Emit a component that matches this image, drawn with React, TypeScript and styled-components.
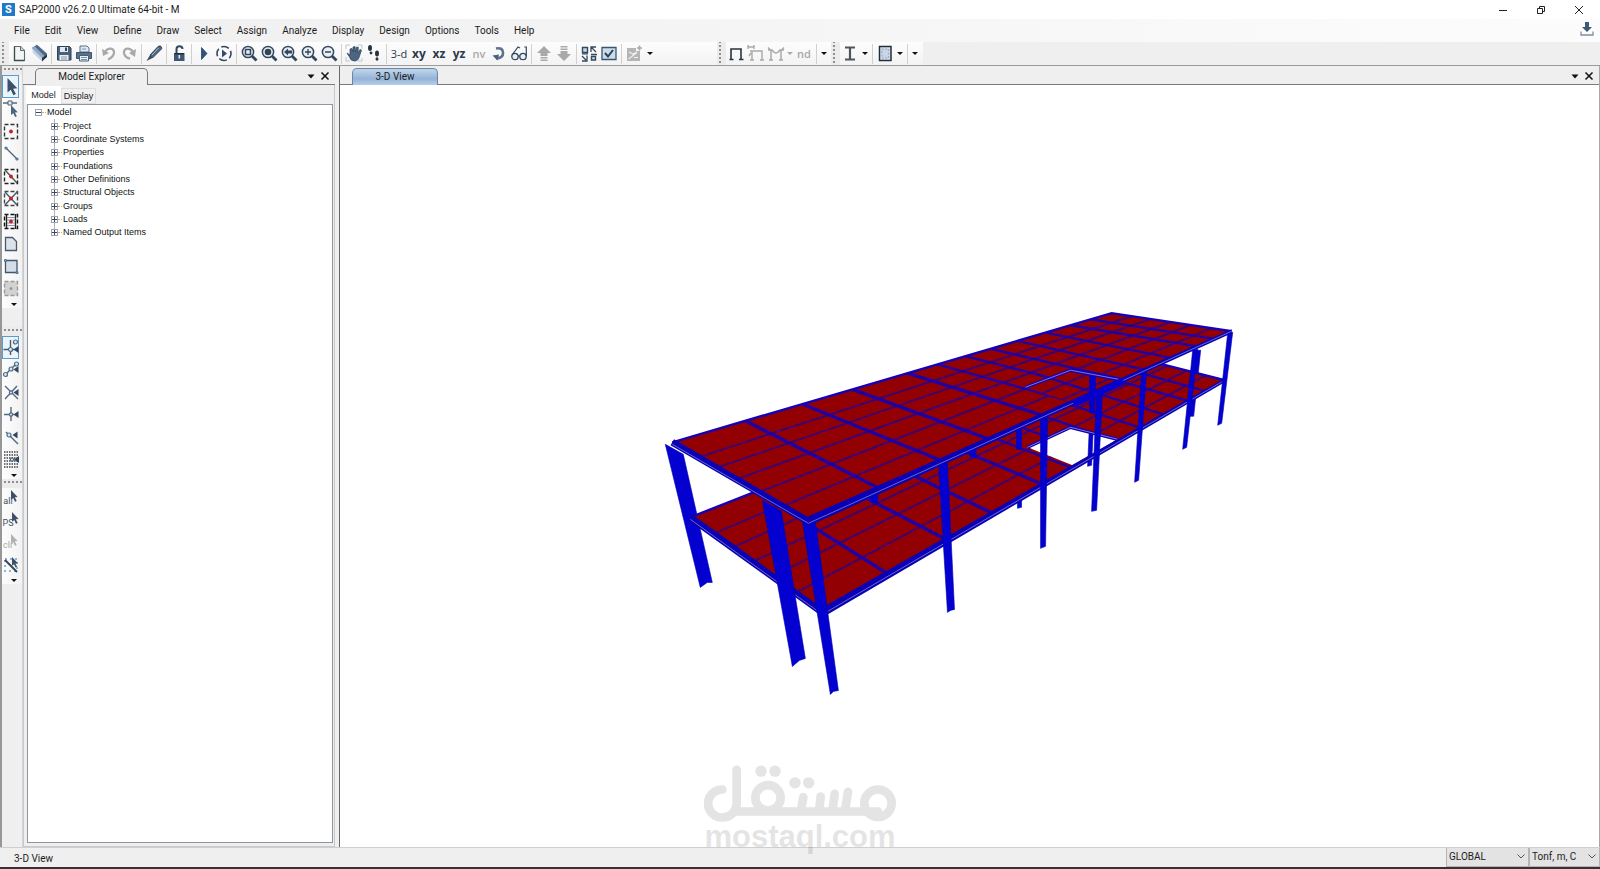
import React, { useState } from 'react';
import styled, { createGlobalStyle } from 'styled-components';

const GlobalStyle = createGlobalStyle`
  * { box-sizing: border-box; }
  body { margin: 0; background: #efefef; }
  button { font: inherit; color: inherit; border: 0; background: none; padding: 0; margin: 0; }
  ul { list-style: none; margin: 0; padding: 0; }
`;

const ui = `Roboto, "Noto Sans", sans-serif`;
const small = `"Liberation Sans", sans-serif`;
const INK = '#33475f';
const GREY = '#a9a9a9';

/* ---------- icons ---------- */

const loupe = (inner: React.ReactNode) => (
  <>
    <circle cx="8" cy="8" r="5.6" fill="#e9eef3" stroke={INK} strokeWidth="1.5" />
    <path d="M12 12l4.5 4.5" stroke={INK} strokeWidth="2.8" />
    {inner}
  </>
);
const pointer = (x: number, y: number, s: number, c = '#3e4f66') => (
  <path transform={`translate(${x} ${y}) scale(${s})`} d="M0 0l8.5 9-3.6.4 2.4 4.6-2.2 1-2.2-4.7L0 12.6z" fill={c} />
);
const dashed = (c: string, fill = 'none') => (
  <rect x="2.5" y="2.5" width="13" height="14" fill={fill} stroke={c} strokeWidth="1.4" strokeDasharray="4 2" />
);
const left = (x: number, y: number) => <path d={`M${x} ${y}l5-3.5v7z`} fill={INK} />;
const node = (x: number, y: number, r = 2) => (
  <circle cx={x} cy={y} r={r} fill="#dbe8f2" stroke="#4a6e90" strokeWidth="1.2" />
);
const line = (d: string, c = INK, w = 1.4) => <path d={d} fill="none" stroke={c} strokeWidth={w} />;

const drawings: Record<string, React.ReactNode> = {
  file: (
    <>
      <path d="M4.500 2.500h6l4 4v10h-10z" fill="#f3f5f4" stroke="#5c6b70" strokeWidth="1.1" />
      <path d="M10.500 2.500v4h4" fill="#c8d0d2" stroke="#5c6b70" />
      <path d="M4.500 2.500v14h10" fill="none" stroke="#3f4b50" strokeWidth="1.3" />
    </>
  ),
  open: (
    <>
      <path d="M2 4l5-3 10 9-5 4z" fill="#8ea9c5" stroke="#6d859e" strokeWidth=".6" />
      <path d="M2 4l10 10v3.500L3 9z" fill="#c3d3e2" />
      <path d="M12 14l5-4v3l-5 4.500z" fill="#23364d" />
      <path d="M7 1l10 9-2.500 2L5 2.500z" fill="#4b6682" />
    </>
  ),
  save: (
    <>
      <path d="M2.500 2.500h12l1.500 1.500v12h-13.500z" fill="#4a617b" stroke="#2f4359" />
      <path d="M5 3h8v5H5z" fill="#dfe9f2" />
      <path d="M10 3.500h2v3.500h-2z" fill={INK} />
      <path d="M4.500 11h9v5h-9z" fill="#e9eef2" />
      {line('M6 13h6M6 15h6', '#8294a6', 1)}
    </>
  ),
  print: (
    <>
      <path d="M5 2h7l2 2v4H5z" fill="#dfe8f0" stroke="#587089" />
      <path d="M1.500 8.500h15v6h-15z" fill="#58728c" stroke="#3c536b" />
      <path d="M4.500 11.500h9v5.500h-9z" fill="#e7eef4" stroke="#47607a" />
      {line('M6 13.500h6M6 15.500h6M7 5h4', '#7f93a7', 1)}
    </>
  ),
  undo: (
    <>
      {line('M5 8c2-4 8-5 9-.5.600 3-2 6.500-6 8', GREY, 2.3)}
      <path d="M2 5l1 7 6-3z" fill={GREY} />
    </>
  ),
  redo: (
    <>
      {line('M13 8c-2-4-8-5-9-.5-.6 3 2 6.500 6 7', GREY, 2.3)}
      <path d="M16 5l-1 8-6-4z" fill={GREY} />
    </>
  ),
  pen: (
    <>
      <path d="M5 11L13 2.500q2.500-1.500 3.500.5t-1 3L7.500 14z" fill="#4f6681" stroke="#26394f" strokeWidth=".8" />
      <path d="M7 11l6.500-7" stroke="#a4bad0" />
      <path d="M5 11l2.500 3L1.500 17z" fill="#3c4b5d" />
    </>
  ),
  lock: (
    <>
      {line('M6.500 9V5q0-2.800 3-2.800T12.500 5', INK, 2)}
      <path d="M4 9h10.500v8H4z" fill="#3f5873" />
      <path d="M8.500 11h1.600v3.500H8.500z" fill="#e4ecf3" />
      {line('M4.500 9.700h9.500', '#16283b', 1.2)}
    </>
  ),
  play: <path d="M6.500 3.500L12 9.500l-5.500 6z" fill="#2f5480" stroke="#203a5b" strokeWidth=".7" />,
  run: (
    <>
      <circle cx="9" cy="9.500" r="7" fill="none" stroke={INK} strokeWidth="1.600" strokeDasharray="8 3" strokeDashoffset="3" />
      <path d="M7 5.500l5 4-5 4z" fill="#2f4c70" />
    </>
  ),
  zoomRect: loupe(<path d="M5.500 5.500h5v5h-5z" fill="none" stroke={INK} strokeWidth="1.500" />),
  zoomAll: loupe(<circle cx="8" cy="8" r="3.300" fill="#345" />),
  zoomPrev: loupe(<path d="M4 8l4-3.500v2h4v3H8v2z" fill={INK} />),
  zoomIn: loupe(line('M5 8h6M8 5v6', INK, 1.3)),
  zoomOut: loupe(line('M5 8h6', INK, 1.5)),
  hand: (
    <>
      <path d="M1 5V1h4M13 1h4v4M17 14v3h-4M5 17H1v-4" fill="none" stroke="#b9c5d0" />
      <path d="M2 9l3 2V5l2-.5L8 8V3l2-.5L10.500 8l1-5 1.800.3L13 9l2-3.500 1.500.7L14.500 12q-1 5-5 5T4.500 13z" fill="#4c6580" stroke="#2c4058" strokeWidth=".7" />
    </>
  ),
  feet: (
    <>
      <ellipse cx="5" cy="4" rx="2" ry="3" fill="#26333f" />
      <ellipse cx="6" cy="9" rx="1.400" ry="1.400" fill="#26333f" />
      <ellipse cx="12" cy="9.500" rx="2" ry="3" fill="#26333f" />
      <ellipse cx="12" cy="15" rx="1.500" ry="1.700" fill="#26333f" />
    </>
  ),
  rotate: (
    <>
      {line('M6 4.500q6.500-1.500 7 4T6 14.500', '#5c748d', 2.600)}
      <path d="M2.500 11.500l6.500-1-1.500 6z" fill="#49617b" />
    </>
  ),
  glasses: (
    <>
      <circle cx="5" cy="12.500" r="3.200" fill="#e7edf2" stroke={INK} strokeWidth="1.300" />
      <circle cx="13" cy="12.500" r="3.200" fill="#e7edf2" stroke={INK} strokeWidth="1.300" />
      {line('M8 12h2M2 11L8 3l2 1M16.300 12V3l-2 0', INK, 1.2)}
    </>
  ),
  up: <path d="M9 2l7 7h-3.500v3h-7V9H2zM5.500 13h7v1.500h-7zM5.500 15.500h7V17h-7z" fill={GREY} />,
  down: <path d="M9 17l7-7h-3.500V7h-7v3H2zM5.500 4.500h7V6h-7zM5.500 2h7v1.500h-7z" fill={GREY} />,
  windows: (
    <>
      <path d="M2.500 3.500h5v5h-5zM11.500 12.500h4v3.500h-4z" fill="#c9d8e8" stroke={INK} strokeWidth="1.400" />
      {line('M11 8V3h5M11 3l5 5M2 12l4 4M7 11.500V17H2M2 9.800h6M11 10.500h6', INK, 1.3)}
    </>
  ),
  check: (
    <>
      <path d="M2 3.500h14v12H2z" fill="#cbdcec" stroke="#3d5670" strokeWidth="1.300" />
      {line('M5 9l3 3.500L13 6', '#2c4258', 2)}
    </>
  ),
  object: (
    <>
      <path d="M2 4h9v3h4v10H2z" fill="#b5b5b5" />
      {line('M4 8l4 2 4-2M3.500 15L12 8.500M9 13.500h4', '#efefef', 1.200)}
      {line('M12 4h5M14.500 1.500v5', GREY, 1.600)}
    </>
  ),
  frame: line('M2.500 15.500h4M4 15.500V5h10v10.500M12 15.500h4.500', '#273342', 1.600),
  frameLoad: line('M3 7h12v9M5 7v9M3 16h4M13 16h4M1 1v4M1 3h6M7 1v4M4 9l-2 3', GREY, 1.4),
  frameMoment: line('M1 6h4q4 6 8 0h4M4 6v10M14 6v10M2 16h4M12 16h4M1 3.500l3 3M17 3.500l-3 3', GREY, 1.500),
  ibeam: line('M4 3.500h10M9 3.500v12M4 15.500h10', '#4b565f', 2.200),
  section: (
    <>
      <path d="M3.500 2.500h11.500v14H3.500z" fill="#d8e2ef" stroke="#202d3c" strokeWidth="1.500" />
      <path d="M5.800 5h7v9h-7z" fill="#c7d5e8" stroke="#8fa0b5" strokeDasharray="2 1.500" />
    </>
  ),
  select: pointer(5.5, 1, 1.15),
  reshape: (
    <>
      {line('M1 4h14', '#4c5f75', 1.4)}
      <path d="M6 2h4v4H6z" fill="#e5edf4" stroke="#4c5f75" />
      {pointer(9, 6, 0.8, '#4c6680')}
    </>
  ),
  joint: <>{dashed('#333')}<circle cx="9" cy="9.500" r="1.900" fill="#c4202a" /></>,
  line: <>{line('M4 4l11 11', '#4c6279', 1.3)}{node(4, 4, 1)}{node(15, 15, 1)}</>,
  quickLine: <>{dashed('#222')}{line('M3 3l12 13', '#555', 1.4)}<circle cx="9" cy="9.500" r="1.900" fill="#c4202a" /></>,
  brace: <>{dashed('#444')}{line('M3 3l12 13M15 3L3 16', '#445b74', 1.4)}<circle cx="9" cy="9.500" r="1.900" fill="#c4202a" /></>,
  secondary: (
    <>
      {dashed('#111')}
      {line('M4.500 2v15M13.500 2v15', '#222', 1.400)}
      {line('M5 5.500h8M5 8h8M5 11h8M5 13.500h8', '#8797a8', 1)}
      <circle cx="9" cy="9.500" r="1.900" fill="#c4202a" />
    </>
  ),
  poly: <path d="M3.500 3.500h7l4 4v9h-11z" fill="#dbe2ea" stroke="#4c5b6b" strokeWidth="1.300" />,
  rect: (
    <>
      <path d="M3.500 3.500h11.500v12H3.500z" fill="#d3dde9" stroke="#44566a" strokeWidth="1.300" />
      {node(3.500, 3.500, 1)}{node(15, 15.500, 1)}
    </>
  ),
  quickRect: <>{dashed('#999', '#d2d2d2')}<circle cx="9" cy="9.500" r="1.500" fill="#999" /></>,
  snapPoint: <>{line('M1.500 11.500h11M8.500 2v15', '#555')}{node(8.500, 11.500)}{node(13.500, 4)}{left(11.500, 11.500)}</>,
  snapMid: <>{line('M3 15L15 3', '#54687e')}{node(3.500, 14.500)}{node(9, 9)}{node(14.500, 4)}{left(11.500, 9.500)}</>,
  snapCross: <>{line('M3 3l13 13M15 3L3 16', '#54687e')}{node(9, 9.500, 1.600)}{left(11.500, 9.500)}</>,
  snapPerp: <>{line('M2 9.500h10M9 2v14', '#54687e')}{node(9, 9.500, 1.600)}{left(11.500, 9.500)}</>,
  snapLine: <>{line('M4 4l12 12', '#54687e')}{node(7, 7)}{left(10.500, 7)}</>,
  snapGrid: (
    <>
      {[2, 5, 8, 11, 14, 17].map(y => (
        <path key={y} d={`M2 ${y}h15`} stroke="#444" strokeWidth="1.300" strokeDasharray="1.500 1" />
      ))}
      {node(10, 9.500, 1.600)}{left(12, 9.500)}
    </>
  ),
  cut: (
    <>
      <rect x="3" y="3" width="12" height="12" fill="none" stroke="#8eb4d3" strokeDasharray="2 3" strokeWidth="2" />
      {line('M3 4l12 12', INK, 2)}{pointer(10, 1, 0.7)}
    </>
  ),
};

const Glyph = styled.svg`
  display: block;
  width: 18px;
  height: 19px;
  flex: none;
`;
const Icon = ({ name }: { name: string }) => (
  <Glyph viewBox="0 0 18 19" aria-hidden="true">{drawings[name]}</Glyph>
);

/* ---------- window frame ---------- */

const Window = styled.div`
  display: flex;
  flex-direction: column;
  min-height: 100vh;
  position: relative;
  font: 10px/14px ${ui};
  color: #1c1c1c;
`;
const TitleBar = styled.header`
  display: flex;
  align-items: center;
  height: 19px;
  padding: 0 2px;
  background: #fff;
`;
const AppBadge = styled.span`
  display: grid;
  place-items: center;
  width: 13px;
  height: 13px;
  background: #1f7ac8;
  color: #fff;
  font: bold 11px/13px ${ui};
  margin-right: 4px;
`;
const AppTitle = styled.h1`
  flex: 1;
  margin: 0;
  font: 10px/16px ${ui};
`;
const WindowButton = styled.button`
  width: 38px;
  height: 16px;
  display: grid;
  place-items: center;
`;
const MenuBar = styled.nav`
  display: flex;
  align-items: center;
  height: 23px;
  padding: 0 6px 0 14px;
  gap: 15px;
  background: linear-gradient(90deg, #efefef, #fcfcfc);
`;
const MenuButton = styled.button`
  height: 20px;
`;
const MenuEnd = styled.button`
  margin-left: auto;
`;
const ToolRow = styled.div`
  display: flex;
  height: 24px;
  border-bottom: 1px solid #9b9b9b;
`;
const ToolBar = styled.div<{ $w: number }>`
  display: flex;
  align-items: center;
  width: ${p => p.$w}px;
  background: linear-gradient(#fdfdfd, #f3f3f3);
`;
const Grip = styled.span`
  align-self: stretch;
  width: 9px;
  flex: none;
  background: radial-gradient(circle, #8f8f8f 1px, transparent 1px) 1px 2px / 4px 4px repeat-y, #ececec;
`;
const Tool = styled.button<{ $w?: number; $off?: boolean; $bold?: boolean }>`
  width: ${p => p.$w ?? 20}px;
  height: 22px;
  display: grid;
  place-items: center;
  color: ${p => (p.$off ? GREY : '#2c3a4b')};
  font: ${p => (p.$bold ? 'bold 12px' : p.$off ? '600 11px' : '11px')}/16px "Open Sans", ${ui};
`;
const Divider = styled.span`
  width: 1px;
  height: 20px;
  margin: 0 2px;
  background: #d0d0d0;
`;
const Caret = styled.span<{ $off?: boolean }>`
  border: 3px solid transparent;
  border-top: 3px solid ${p => (p.$off ? GREY : '#111')};
  border-bottom: 0;
`;

/* ---------- body ---------- */

const Body = styled.div`
  flex: 1;
  display: flex;
  border-left: 2px solid #979797;
`;
const SideBar = styled.aside`
  width: 21px;
  flex: none;
  border-right: 1px solid #d5d5d5;
`;
const SideGroup = styled.div`
  display: flex;
  flex-direction: column;
  background: linear-gradient(90deg, #fdfdfd, #f2f2f2);
`;
const SideGrip = styled.div`
  height: 9px;
  background: radial-gradient(circle, #8f8f8f 1px, transparent 1px) 1px 1px / 4px 4px repeat-x, #ececec;
`;
const SideStack = styled.div<{ $h: number }>`
  display: flex;
  flex-direction: column;
  height: ${p => p.$h}px;
`;
const SideTool = styled.button<{ $on?: boolean; $off?: boolean }>`
  flex: 1;
  width: 17px;
  display: flex;
  align-items: center;
  justify-content: center;
  overflow: hidden;
  color: ${p => (p.$off ? GREY : '#3e5065')};
  ${p => p.$on && 'box-shadow: inset 0 0 0 1px #5c9ccb; background: #eaf4fb;'}
`;
const SideMore = styled.button`
  height: 8px;
  width: 20px;
  padding-left: 4px;
  display: grid;
  place-items: center;
`;
const WordPointer = styled.span`
  display: flex;
  font: 9px/14px ${ui};
  padding-top: 4px;
  svg { margin: -4px 0 0 -2px; flex: none; }
`;
const Gap = styled.div`
  height: 19px;
`;

const Explorer = styled.section`
  width: 312px;
  flex: none;
  display: flex;
  flex-direction: column;
`;
const PaneHead = styled.div`
  display: flex;
  align-items: flex-end;
  height: 19px;
  padding-right: 3px;
  box-shadow: inset 0 -1px #7b7b7b;
`;
const PaneTitle = styled.h2<{ $view?: boolean }>`
  margin: 0 auto 0 12px;
  width: ${p => (p.$view ? 86 : 113)}px;
  height: 17px;
  border: 1px solid ${p => (p.$view ? '#6b86a5' : '#7b7b7b')};
  border-bottom: 0;
  border-radius: 5px 5px 0 0;
  background: ${p => (p.$view ? 'linear-gradient(#c3d6ea, #93b4d8 60%, #b4cde8)' : '#efefef')};
  text-align: center;
  font: 10px/15px ${ui};
`;
const PaneButton = styled.button`
  width: 14px;
  height: 18px;
  display: grid;
  place-items: center;
`;
const PaneBody = styled.div`
  flex: 1;
  display: flex;
  flex-direction: column;
  padding: 1px 1px 3px 2px;
  border: 1px solid #c9c9c9;
  border-top: 0;
`;
const Tabs = styled.div`
  display: flex;
  align-items: flex-end;
  height: 18px;
  font: 9px/14px ${small};
`;
const TabButton = styled.button<{ $on: boolean }>`
  width: 35px;
  height: ${p => (p.$on ? 18 : 16)}px;
  background: ${p => (p.$on ? '#fff' : '#f0f0f0')};
  border: 1px solid ${p => (p.$on ? '#fff' : '#dedede')};
  padding: 0;
`;
const Tree = styled.ul`
  && { flex: 1; padding: 1px 0 0 7px; }
  margin-left: 1px;
  border: 1px solid #8d95a0;
  background: #fff;
  font: 9px/13px ${small};
  color: #111;
`;
const Branch = styled.ul`
  && { padding-left: 16px; }
  background: linear-gradient(#b5b5b5, #b5b5b5) 19px 0 / 1px 115px no-repeat;
`;
const TreeRow = styled.div`
  display: flex;
  align-items: center;
  height: 13px;
`;
const TreeItem = styled.li`
  &:nth-child(3n + 1) > div { height: 14px; }
`;
const Toggle = styled.button`
  width: 7px;
  height: 7px;
  display: grid;
  place-items: center;
  background: #fff;
  box-shadow: 0 0 0 1px #9aa3ae inset;
`;
const Stub = styled.span`
  width: 4px;
  margin-right: 1px;
  border-top: 1px dotted #aaa;
`;

const Workspace = styled.main`
  flex: 1;
  min-width: 0;
  margin-left: 4px;
  display: flex;
  flex-direction: column;
  border-left: 1px solid #686868;
  border-right: 1px solid #a8a8a8;
`;
const Canvas = styled.div`
  flex: 1;
  display: flex;
  background: #fff;
`;
const Scene = styled.svg`
  display: block;
  width: 100%;
  height: auto;
  aspect-ratio: 1258 / 761;
`;
const StatusBar = styled.footer`
  display: flex;
  align-items: stretch;
  height: 23px;
  border-top: 1px solid #cfcfcf;
  border-bottom: 3px solid #35332f;
`;
const StatusText = styled.span`
  flex: 1;
  padding: 4px 14px 0;
`;
const Units = styled.select<{ $w: number }>`
  width: ${p => p.$w}px;
  border: 1px solid #b4b4b4;
  border-top: 0;
  background: #e3e3e3
    url("data:image/svg+xml,%3Csvg xmlns='http://www.w3.org/2000/svg' width='8' height='5'%3E%3Cpath d='M.5.5L4 4 7.500.5' fill='none' stroke='%23555'/%3E%3C/svg%3E")
    right 3px center no-repeat;
  appearance: none;
  padding: 1px 2px 0;
  border-radius: 0;
  font: 10px/16px ${ui};
  color: #1c1c1c;
`;
const Watermark = styled.div`
  position: absolute;
  left: 0;
  right: 0;
  bottom: 18px;
  display: flex;
  flex-direction: column;
  align-items: center;
  opacity: 0.1;
  pointer-events: none;
  font: bold 31px/30px ${small};
  color: #000;
`;
const Brand = styled.svg`
  display: block;
  width: 192px;
  height: 57px;
`;

/* ---------- structural model ---------- */

type Pt = [number, number];
interface Slab {
  corners: [Pt, Pt, Pt, Pt]; // left, front, right, back
  frontX: number[];
  backX: number[];
  nearX: number[];
  farX: number[];
  hole: Pt[];
}
const along = (a: Pt, b: Pt, x: number): Pt => [x, a[1] + ((b[1] - a[1]) * (x - a[0])) / (b[0] - a[0])];
const pts = (p: Pt[]) => p.map(q => q.join(',')).join(' ');

const roof: Slab = {
  corners: [[672, 442], [808, 521], [1231, 331], [1111, 313]],
  frontX: [880, 942, 990, 1043, 1073, 1099, 1123, 1145, 1171, 1197, 1214],
  backX: [745, 802, 852, 907, 937, 965, 990, 1017, 1045, 1070, 1090],
  nearX: [698, 716, 736, 758, 782],
  farX: [1131, 1150, 1170, 1190, 1211],
  hole: [[1025, 387], [1070, 370], [1123, 380], [1073, 403]],
};
const floor: Slab = {
  corners: [[690, 517], [822, 612], [1224, 380], [1110, 351]],
  frontX: [888, 947, 993, 1043, 1072, 1095, 1117, 1141, 1164, 1188, 1205],
  backX: [756, 811, 860, 912, 941, 967, 992, 1018, 1045, 1070, 1090],
  nearX: [713, 732, 752, 772, 795],
  farX: [1129, 1148, 1167, 1186, 1205],
  hole: [[1027, 447], [1070, 427], [1117, 439], [1072, 465]],
};

const SlabShape = ({ slab, id }: { slab: Slab; id: string }) => {
  const [l, f, r, b] = slab.corners;
  const outline = `M${pts(slab.corners)}Z`;
  const hole = `M${pts(slab.hole)}Z`;
  const rim = slab.hole.slice(0, 3);
  return (
    <g>
      <clipPath id={id}>
        <path d={outline + hole} clipRule="evenodd" />
      </clipPath>
      <g clipPath={`url(#${id})`}>
        <polygon points={pts(slab.corners)} fill="#920004" />
        {slab.nearX.map((x, i) => {
          const p = along(l, f, x);
          const q = along(b, r, slab.farX[i]);
          return <line key={x} x1={p[0]} y1={p[1]} x2={q[0]} y2={q[1]} stroke="#42006e" strokeWidth="2" />;
        })}
        {slab.frontX.map((x, i) => {
          const p = along(f, r, x);
          const q = along(l, b, slab.backX[i]);
          return (
            <line key={x} x1={p[0]} y1={p[1]} x2={q[0]} y2={q[1]} stroke="#2000a4" strokeWidth={x < 1050 ? 3.4 : 2.4} />
          );
        })}
      </g>
      <polyline points={pts([l, b, r])} fill="none" stroke="#1800b4" strokeWidth="2.4" />
      <polyline points={pts(rim)} fill="none" stroke="#1400b0" strokeWidth="3.4" />
      <polyline points={pts(rim)} fill="none" stroke="#9494e8" strokeWidth=".8" />
      <polyline points={pts([l, f])} stroke="#0a00b4" strokeWidth="7" />
      <polygon points={pts([[f[0], f[1] - 5], [f[0], f[1] + 5], [r[0], r[1] + 2], [r[0], r[1] - 2]])} fill="#0a00b4" />
      <polyline points={pts([[l[0], l[1] + 2], [f[0], f[1] + 2], r])} fill="none" stroke="#8080d4" strokeWidth=".8" />
    </g>
  );
};

const Column = ({ p }: { p: Pt[] }) => <polygon points={pts(p)} fill="#0400d0" stroke="#0000b4" strokeWidth=".6" />;

const rearColumns: Pt[][] = [
  [[665, 444], [683, 454], [712, 582], [707, 582], [700, 587]],
  [[1016, 480], [1021, 480], [1021, 507], [1017, 508]],
  [[1090, 400], [1094, 400], [1091, 465], [1087, 466]],
  [[1193, 350], [1200, 350], [1193, 416], [1188, 416]],
];
const upperColumns: Pt[][] = [
  [[1016, 425], [1021, 425], [1021, 449], [1016, 449]],
  [[1089, 375], [1095, 375], [1094, 414], [1089, 412]],
  [[869, 492], [878, 492], [877, 502], [871, 502]],
  [[969, 450], [976, 450], [975, 457], [970, 457]],
];
const frontColumns: Pt[][] = [
  [[762, 500], [781, 511], [805, 658], [799, 660], [792, 666]],
  [[802, 521], [815, 521], [838, 690], [833, 691], [830, 694]],
  [[938, 463], [947, 463], [954, 609], [950, 610], [947, 612]],
  [[1040, 418], [1047, 418], [1045, 546], [1040, 548]],
  [[1096, 391], [1102, 390], [1096, 510], [1091, 511]],
  [[1141, 372], [1146, 371], [1138, 480], [1134, 482]],
  [[1192, 350], [1197, 349], [1186, 447], [1182, 449]],
  [[1227, 333], [1232, 332], [1221, 423], [1217, 425]],
];

const Building = () => (
  <Scene viewBox="340 85 1258 761" role="img" aria-label="3-D view of a two-storey frame">
    {rearColumns.map((p, i) => <Column key={i} p={p} />)}
    <SlabShape slab={floor} id="floor" />
    {upperColumns.map((p, i) => <Column key={i} p={p} />)}
    {frontColumns.map((p, i) => <Column key={i} p={p} />)}
    <SlabShape slab={roof} id="roof" />
    <polygon points="1072,401 1122,378 1124,384 1074,407" fill="#0800cc" />
  </Scene>
);

/* ---------- data ---------- */

const menus = ['File', 'Edit', 'View', 'Define', 'Draw', 'Select', 'Assign', 'Analyze', 'Display', 'Design', 'Options', 'Tools', 'Help'];
const mainTools = [
  'file', 'open', '|', 'save', 'print', '|', 'undo', 'redo', '|', 'pen', '|', 'lock', '|', 'play', 'run', '|',
  'zoomRect', 'zoomAll', 'zoomPrev', 'zoomIn', 'zoomOut', '|', 'hand', 'feet', '|',
  '3-d', 'xy', 'xz', 'yz', 'nv', 'rotate', 'glasses', '|', 'up', 'down', '|', 'windows', 'check', '|', 'object',
];
const drawTools = ['select', 'reshape', 'joint', 'line', 'quickLine', 'brace', 'secondary', 'poly', 'rect', 'quickRect'];
const snapTools = ['snapPoint', 'snapMid', 'snapCross', 'snapPerp', 'snapLine', 'snapGrid'];
const branches = ['Project', 'Coordinate Systems', 'Properties', 'Foundations', 'Other Definitions', 'Structural Objects', 'Groups', 'Loads', 'Named Output Items'];

const Plus = ({ open }: { open?: boolean }) => (
  <svg width="5" height="5" viewBox="0 0 5 5" aria-hidden="true">
    <path d={open ? 'M0 2.500h5' : 'M0 2.500h5M2.500 0v5'} stroke="#445" />
  </svg>
);
const Cross = () => (
  <svg width="10" height="10" viewBox="0 0 10 10" aria-hidden="true">
    <path d="M1.500 1.500l7 7M8.500 1.500l-7 7" stroke="#111" strokeWidth="1.500" />
  </svg>
);
const PaneCaret = () => (
  <svg width="8" height="5" viewBox="0 0 8 5" aria-hidden="true"><path d="M.5.5h7L4 4.500z" fill="#111" /></svg>
);
const Words = ({ text, off }: { text: string; off?: boolean }) => (
  <WordPointer>
    {text}
    <svg width="7" height="12" viewBox="0 0 7 12" aria-hidden="true">{pointer(0, 0, 0.78, off ? '#b0b0b0' : '#3e4f66')}</svg>
  </WordPointer>
);

export default function App() {
  const [tab, setTab] = useState('Model');
  return (
    <Window>
      <GlobalStyle />
      <TitleBar>
        <AppBadge aria-hidden="true">S</AppBadge>
        <AppTitle>SAP2000 v26.2.0 Ultimate 64-bit - M</AppTitle>
        <WindowButton aria-label="Minimize">
          <svg width="10" height="10" viewBox="0 0 10 10"><path d="M1 5.500h8" stroke="#222" /></svg>
        </WindowButton>
        <WindowButton aria-label="Restore">
          <svg width="10" height="10" viewBox="0 0 10 10">
            <path d="M1.500 3.500h5v5h-5zM3.500 3V1.500h5v5H7" fill="none" stroke="#222" />
          </svg>
        </WindowButton>
        <WindowButton aria-label="Close">
          <svg width="10" height="10" viewBox="0 0 10 10"><path d="M1 1l8 8M9 1L1 9" stroke="#222" /></svg>
        </WindowButton>
      </TitleBar>
      <MenuBar>
        {menus.map(m => <MenuButton key={m}>{m}</MenuButton>)}
        <MenuEnd aria-label="Download">
          <svg width="14" height="14" viewBox="0 0 14 14">
            <path d="M5 0h4v5h3L7 10 2 5h3z" fill="#3f5874" />
            <path d="M1 9.500v3.500h12V9.500" fill="none" stroke="#7c8ea1" strokeWidth="1.300" />
          </svg>
        </MenuEnd>
      </MenuBar>
      <ToolRow>
        <ToolBar $w={717}>
          <Grip />
          {mainTools.map((t, i) =>
            t === '|' ? <Divider key={i} /> : (
              <Tool key={i} aria-label={t} $off={t === 'nv'} $bold={/^(xy|xz|yz)$/.test(t)}>
                {drawings[t] ? <Icon name={t} /> : t}
              </Tool>
            ))}
          <Tool $w={12} aria-label="More"><Caret /></Tool>
        </ToolBar>
        <ToolBar $w={114}>
          <Grip />
          <Tool aria-label="frame"><Icon name="frame" /></Tool>
          <Tool aria-label="loads"><Icon name="frameLoad" /></Tool>
          <Tool aria-label="moments"><Icon name="frameMoment" /></Tool>
          <Tool $w={8} aria-label="More"><Caret $off /></Tool>
          <Tool $off>nd</Tool>
          <Divider />
          <Tool $w={10} aria-label="More"><Caret /></Tool>
        </ToolBar>
        <ToolBar $w={92}>
          <Grip />
          <Tool aria-label="steel"><Icon name="ibeam" /></Tool>
          <Tool $w={10} aria-label="More"><Caret /></Tool>
          <Divider />
          <Tool aria-label="concrete"><Icon name="section" /></Tool>
          <Tool $w={10} aria-label="More"><Caret /></Tool>
          <Divider />
          <Tool $w={10} aria-label="More"><Caret /></Tool>
        </ToolBar>
      </ToolRow>
      <Body>
        <SideBar>
          <SideGroup>
            <SideGrip />
            <SideStack $h={225}>
              {drawTools.map(t => (
                <SideTool key={t} $on={t === 'select'} aria-label={t}><Icon name={t} /></SideTool>
              ))}
            </SideStack>
            <SideMore aria-label="More"><Caret /></SideMore>
          </SideGroup>
          <Gap />
          <SideGroup>
            <SideGrip />
            <SideStack $h={135}>
              {snapTools.map(t => (
                <SideTool key={t} $on={t === 'snapPoint'} aria-label={t}><Icon name={t} /></SideTool>
              ))}
            </SideStack>
            <SideMore aria-label="More"><Caret /></SideMore>
          </SideGroup>
          <SideGroup>
            <SideGrip />
            <SideStack $h={88}>
              <SideTool><Words text="all" /></SideTool>
              <SideTool><Words text="PS" /></SideTool>
              <SideTool $off><Words text="clr" off /></SideTool>
              <SideTool aria-label="cut"><Icon name="cut" /></SideTool>
            </SideStack>
            <SideMore aria-label="More"><Caret /></SideMore>
          </SideGroup>
        </SideBar>
        <Explorer>
          <PaneHead>
            <PaneTitle>Model Explorer</PaneTitle>
            <PaneButton aria-label="Pane menu"><PaneCaret /></PaneButton>
            <PaneButton aria-label="Close pane"><Cross /></PaneButton>
          </PaneHead>
          <PaneBody>
            <Tabs role="tablist">
              {['Model', 'Display'].map(t => (
                <TabButton key={t} role="tab" aria-selected={tab === t} $on={tab === t} onClick={() => setTab(t)}>{t}</TabButton>
              ))}
            </Tabs>
            <Tree>
              <li>
                <TreeRow><Toggle aria-label="Collapse"><Plus open /></Toggle><Stub />Model</TreeRow>
                <Branch>
                  {branches.map(b => (
                    <TreeItem key={b}>
                      <TreeRow><Toggle aria-label={`Expand ${b}`}><Plus /></Toggle><Stub />{b}</TreeRow>
                    </TreeItem>
                  ))}
                </Branch>
              </li>
            </Tree>
          </PaneBody>
        </Explorer>
        <Workspace>
          <PaneHead>
            <PaneTitle $view>3-D View</PaneTitle>
            <PaneButton aria-label="View menu"><PaneCaret /></PaneButton>
            <PaneButton aria-label="Close view"><Cross /></PaneButton>
          </PaneHead>
          <Canvas><Building /></Canvas>
        </Workspace>
      </Body>
      <StatusBar>
        <StatusText>3-D View</StatusText>
        <Units $w={83} aria-label="Coordinate system"><option>GLOBAL</option></Units>
        <Units $w={71} aria-label="Units"><option>Tonf, m, C</option></Units>
      </StatusBar>
      <Watermark>
        <Brand viewBox="72 72 576 170" role="img" aria-label="mostaql" fill="none" stroke="#000" strokeWidth="26">
          <circle cx="594" cy="186" r="41" />
          <path d="M594 211H170M170 86v100a43 42 0 1 1-43-41" strokeLinecap="round" />
          <circle cx="264" cy="170" r="38" />
          <path d="M504 152l-8 50M464 158l-6 44M422 166l-4 36M370 168l-6 34" strokeLinecap="round" />
          <g fill="#000" stroke="none">
            <circle cx="345" cy="125" r="17" /><circle cx="386" cy="125" r="17" />
            <circle cx="243" cy="90" r="17" /><circle cx="285" cy="90" r="17" />
          </g>
        </Brand>
        mostaql.com
      </Watermark>
    </Window>
  );
}
